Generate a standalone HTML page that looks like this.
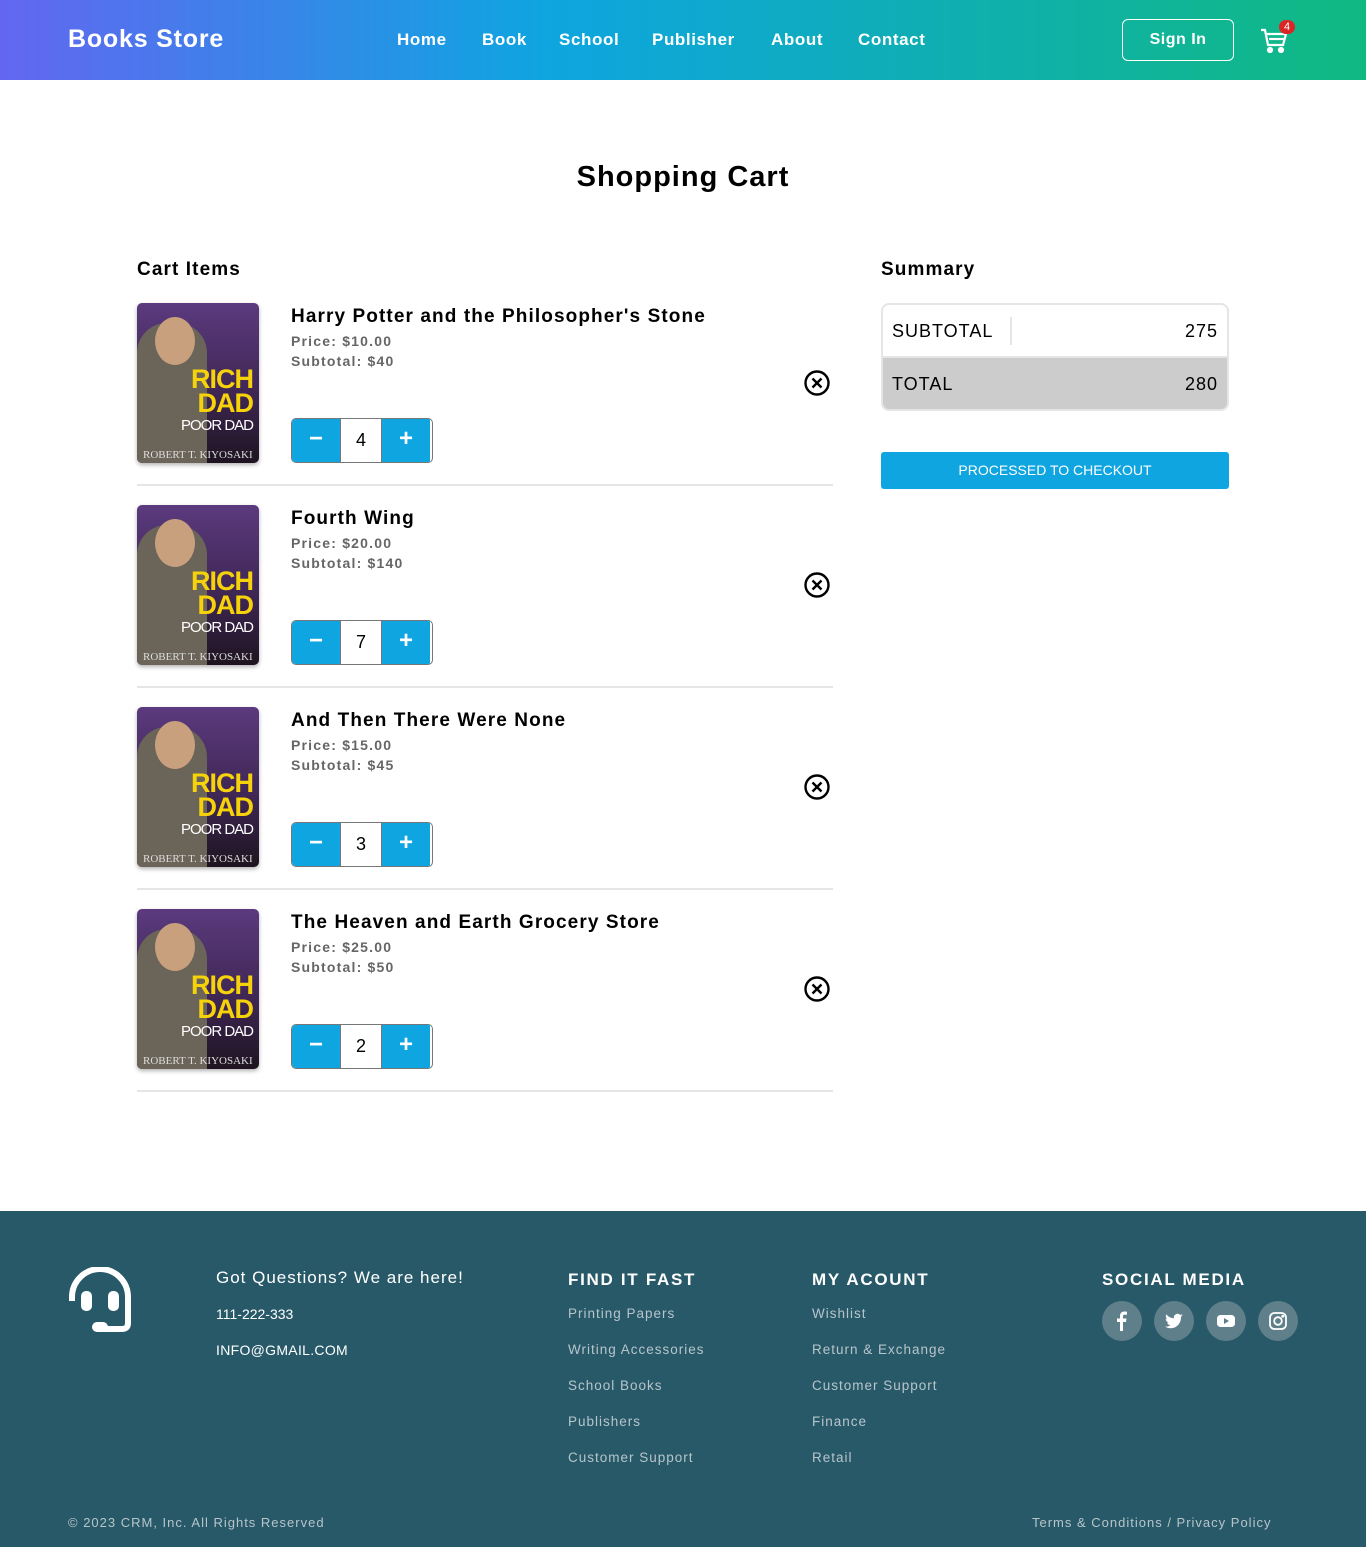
<!DOCTYPE html>
<html><head><meta charset="utf-8"><style>
*{box-sizing:border-box;margin:0;padding:0}
body{width:1366px;height:1547px;font-family:"Liberation Sans",sans-serif;background:#fff;position:relative;color:#000}
.hdr{position:absolute;left:0;top:0;width:1366px;height:80px;background:linear-gradient(90deg,#6366f1 0%,#0ea5e0 40%,#10b981 100%)}
.logo{position:absolute;left:68px;top:25px;color:#fff;font-weight:bold;font-size:25px;letter-spacing:.8px}
.nav{position:absolute;top:30px;color:#fff;font-weight:bold;font-size:17px;letter-spacing:.6px}
.signin{position:absolute;left:1122px;top:19px;width:112px;height:42px;border:1px solid #fff;border-radius:6px;color:#fff;font-size:16px;font-weight:bold;text-align:center;line-height:40px;letter-spacing:.5px}
.badge{position:absolute;left:1279px;top:20px;width:16px;height:14px;border-radius:7px;background:#dc2626;color:#fff;font-size:11px;text-align:center;line-height:14px}
h1{position:absolute;left:0;width:1366px;top:161px;text-align:center;font-size:29px;font-weight:bold;letter-spacing:1px}
.sec{position:absolute;top:259px;font-size:19px;font-weight:bold;letter-spacing:1.1px}
.item{position:absolute;left:137px;width:696px;height:183px;border-bottom:2px solid #e5e5e5}
.cover{position:absolute;left:0;top:0;width:122px;height:160px;border-radius:5px;background:linear-gradient(180deg,#5b3a7e 0%,#3d2550 60%,#1d1420 100%);overflow:hidden;box-shadow:0 2px 4px rgba(0,0,0,.3)}
.cover .man{position:absolute;left:0;top:20px;width:70px;height:140px;background:#6b6458;border-radius:30px 30px 0 0}
.cover .face{position:absolute;left:18px;top:14px;width:40px;height:48px;background:#c9a07e;border-radius:50%}
.cover .t{position:absolute;right:6px;top:64px;color:#f6d20a;font-weight:bold;font-size:27px;line-height:24px;text-align:right;letter-spacing:-1px}
.cover .p{position:absolute;right:6px;top:114px;color:#fff;font-size:15px;letter-spacing:-1px}
.cover .a{position:absolute;left:6px;bottom:2px;color:#ddd;font-size:11px;font-family:"Liberation Serif",serif}
.ttl{position:absolute;left:154px;top:3px;font-size:19px;font-weight:bold;letter-spacing:1.1px}
.pr{position:absolute;left:154px;font-size:14px;font-weight:bold;color:#666;letter-spacing:1.2px}
.qty{position:absolute;left:154px;top:115px;width:142px;height:45px;border:1px solid #777;border-radius:5px;overflow:hidden;display:flex}
.qty .b{width:48px;background:#0ea5e0;color:#fff;font-size:24px;font-weight:bold;text-align:center;line-height:40px}
.qty .n{width:42px;background:#fff;text-align:center;line-height:43px;font-size:18px;border-left:1px solid #777;border-right:1px solid #777}
.x{position:absolute;left:667px;top:67px}
.sum{position:absolute;left:881px;top:303px;width:348px;height:108px;border:2px solid #e5e5e5;border-radius:8px;overflow:hidden}
.sum .r{height:53px;position:relative;font-size:18px;letter-spacing:1px;line-height:53px;padding:0 9px}
.btn{position:absolute;left:881px;top:452px;width:348px;height:37px;background:#0ea5e0;border-radius:3px;color:#fff;text-align:center;line-height:37px;font-size:14px}
.ft{position:absolute;left:0;top:1211px;width:1366px;height:336px;background:#285969;color:#fff}
.ft .h{position:absolute;font-weight:bold;font-size:17px;letter-spacing:1.7px}
.ft .l{position:absolute;font-size:13.5px;color:#b7c5ca;letter-spacing:1px}
.soc{position:absolute;top:90px;width:40px;height:40px;border-radius:50%;background:#5f7f8a}
.soc svg{position:absolute;left:10px;top:10px}
</style></head><body>
<div class="hdr">
<div class="logo">Books Store</div>
<div class="nav" style="left:397px">Home</div>
<div class="nav" style="left:482px">Book</div>
<div class="nav" style="left:559px">School</div>
<div class="nav" style="left:652px">Publisher</div>
<div class="nav" style="left:771px">About</div>
<div class="nav" style="left:858px">Contact</div>
<div class="signin">Sign In</div>
<svg style="position:absolute;left:1260px;top:28px" width="28" height="26" viewBox="0 0 28 26" fill="none" stroke="#fff" stroke-width="2.2"><path d="M1 2h4l3 15h15l3-11H7"/><path d="M9 11h15"/><circle cx="10" cy="22" r="2" fill="#fff"/><circle cx="21" cy="22" r="2" fill="#fff"/></svg>
<div class="badge">4</div>
</div>
<h1>Shopping Cart</h1>
<div class="sec" style="left:137px">Cart Items</div>
<div class="sec" style="left:881px">Summary</div>

<div class="item" style="top:303px">
<div class="cover"><div class="man"></div><div class="face"></div><div class="t">RICH<br>DAD</div><div class="p">POOR DAD</div><div class="a">ROBERT T. KIYOSAKI</div></div>
<div class="ttl">Harry Potter and the Philosopher's Stone</div>
<div class="pr" style="top:30px">Price: $10.00</div><div class="pr" style="top:50px">Subtotal: $40</div>
<div class="qty"><div class="b">−</div><div class="n">4</div><div class="b">+</div></div>
<svg class="x" width="28" height="28" viewBox="0 0 28 28" fill="none" stroke="#000" stroke-width="2.4"><circle cx="13" cy="13" r="11.5"/><path d="M8.5 8.5l9 9M17.5 8.5l-9 9"/></svg>
</div>
<div class="item" style="top:505px">
<div class="cover"><div class="man"></div><div class="face"></div><div class="t">RICH<br>DAD</div><div class="p">POOR DAD</div><div class="a">ROBERT T. KIYOSAKI</div></div>
<div class="ttl">Fourth Wing</div>
<div class="pr" style="top:30px">Price: $20.00</div><div class="pr" style="top:50px">Subtotal: $140</div>
<div class="qty"><div class="b">−</div><div class="n">7</div><div class="b">+</div></div>
<svg class="x" width="28" height="28" viewBox="0 0 28 28" fill="none" stroke="#000" stroke-width="2.4"><circle cx="13" cy="13" r="11.5"/><path d="M8.5 8.5l9 9M17.5 8.5l-9 9"/></svg>
</div>
<div class="item" style="top:707px">
<div class="cover"><div class="man"></div><div class="face"></div><div class="t">RICH<br>DAD</div><div class="p">POOR DAD</div><div class="a">ROBERT T. KIYOSAKI</div></div>
<div class="ttl">And Then There Were None</div>
<div class="pr" style="top:30px">Price: $15.00</div><div class="pr" style="top:50px">Subtotal: $45</div>
<div class="qty"><div class="b">−</div><div class="n">3</div><div class="b">+</div></div>
<svg class="x" width="28" height="28" viewBox="0 0 28 28" fill="none" stroke="#000" stroke-width="2.4"><circle cx="13" cy="13" r="11.5"/><path d="M8.5 8.5l9 9M17.5 8.5l-9 9"/></svg>
</div>
<div class="item" style="top:909px">
<div class="cover"><div class="man"></div><div class="face"></div><div class="t">RICH<br>DAD</div><div class="p">POOR DAD</div><div class="a">ROBERT T. KIYOSAKI</div></div>
<div class="ttl">The Heaven and Earth Grocery Store</div>
<div class="pr" style="top:30px">Price: $25.00</div><div class="pr" style="top:50px">Subtotal: $50</div>
<div class="qty"><div class="b">−</div><div class="n">2</div><div class="b">+</div></div>
<svg class="x" width="28" height="28" viewBox="0 0 28 28" fill="none" stroke="#000" stroke-width="2.4"><circle cx="13" cy="13" r="11.5"/><path d="M8.5 8.5l9 9M17.5 8.5l-9 9"/></svg>
</div>

<div class="sum">
<div class="r" style="border-bottom:2px solid #e5e5e5">SUBTOTAL<span style="position:absolute;left:127px;top:12px;height:28px;border-left:2px solid #e5e5e5"></span><span style="position:absolute;right:9px">275</span></div>
<div class="r" style="background:#cccccc">TOTAL<span style="position:absolute;right:9px">280</span></div>
</div>
<div class="btn">PROCESSED TO CHECKOUT</div>

<div class="ft">
<svg style="position:absolute;left:68px;top:56px" width="66" height="66" viewBox="0 0 66 66" fill="none" stroke="#fff" stroke-width="6"><path d="M4 34V30A28 28 0 0 1 60 30V56Q60 62 54 62H30"/><rect x="13" y="24" width="11" height="20" rx="5" fill="#fff" stroke="none"/><rect x="40" y="24" width="11" height="20" rx="5" fill="#fff" stroke="none"/><rect x="24" y="55" width="16" height="10" rx="5" fill="#fff" stroke="none"/></svg>
<div style="position:absolute;left:216px;top:57px;font-size:17px;letter-spacing:1px">Got Questions? We are here!</div>
<div style="position:absolute;left:216px;top:95px;font-size:14px">111-222-333</div>
<div style="position:absolute;left:216px;top:131px;font-size:14px;letter-spacing:.3px">INFO@GMAIL.COM</div>
<div class="h" style="left:568px;top:59px">FIND IT FAST</div>
<div class="l" style="left:568px;top:95px">Printing Papers</div>
<div class="l" style="left:568px;top:131px">Writing Accessories</div>
<div class="l" style="left:568px;top:167px">School Books</div>
<div class="l" style="left:568px;top:203px">Publishers</div>
<div class="l" style="left:568px;top:239px">Customer Support</div>
<div class="h" style="left:812px;top:59px">MY ACOUNT</div>
<div class="l" style="left:812px;top:95px">Wishlist</div>
<div class="l" style="left:812px;top:131px">Return &amp; Exchange</div>
<div class="l" style="left:812px;top:167px">Customer Support</div>
<div class="l" style="left:812px;top:203px">Finance</div>
<div class="l" style="left:812px;top:239px">Retail</div>
<div class="h" style="left:1102px;top:59px">SOCIAL MEDIA</div>
<div class="soc" style="left:1102px"><svg width="20" height="20" viewBox="0 0 20 20"><path d="M11 20V11h3l.5-3.5H11V5.5c0-1 .3-1.7 1.8-1.7H15V.7C14.5.6 13.4.5 12.3.5 9.8.5 8 2 8 4.8v2.7H5V11h3v9z" fill="#fff"/></svg></div>
<div class="soc" style="left:1154px"><svg width="20" height="20" viewBox="0 0 20 20"><path d="M19 4.5c-.7.3-1.4.5-2.1.6.8-.5 1.3-1.2 1.6-2-.7.4-1.5.7-2.3.9A3.7 3.7 0 0 0 9.9 7.3 10.4 10.4 0 0 1 2.3 3.4a3.7 3.7 0 0 0 1.1 4.9c-.6 0-1.2-.2-1.7-.5 0 1.8 1.3 3.3 3 3.6-.5.2-1.1.2-1.7.1.5 1.5 1.8 2.5 3.4 2.6A7.4 7.4 0 0 1 1 15.6 10.4 10.4 0 0 0 17 6.3V5.8c.8-.4 1.4-1 2-1.3z" fill="#fff"/></svg></div>
<div class="soc" style="left:1206px"><svg width="20" height="20" viewBox="0 0 20 20"><rect x="1" y="4" width="18" height="12" rx="3.5" fill="#fff"/><path d="M8 7l5 3-5 3z" fill="#5f7f8a"/></svg></div>
<div class="soc" style="left:1258px"><svg width="20" height="20" viewBox="0 0 20 20" fill="none" stroke="#fff" stroke-width="1.8"><rect x="2" y="2" width="16" height="16" rx="4.5"/><circle cx="10" cy="10" r="3.8"/><circle cx="14.8" cy="5.2" r=".6" fill="#fff"/></svg></div>
<div class="l" style="left:68px;top:304px;font-size:13px">© 2023 CRM, Inc. All Rights Reserved</div>
<div class="l" style="left:1032px;top:304px;font-size:13px">Terms &amp; Conditions / Privacy Policy</div>
</div>
</body></html>
